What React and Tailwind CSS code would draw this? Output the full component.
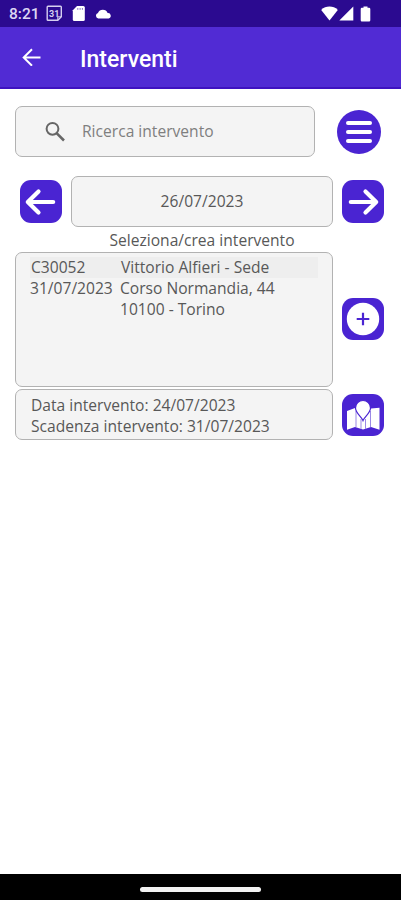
const intervento = {
    codice: "C30052",
    scadenza: "31/07/2023",
    cliente: "Vittorio Alfieri - Sede",
    indirizzo: "Corso Normandia, 44",
    citta: "10100 - Torino",
}

const box = "border border-b-[1.5px] border-[#b2b2b2] bg-[#f4f4f4] rounded-[7px]"
const squareButton = "w-[42px] shrink-0 rounded-[11px] bg-[#4a24d2] cursor-pointer"


function StatusBar(){
    return(
        <div className="h-[27px] bg-[#2b0a90] flex items-center justify-between pl-[9px] pr-[30px] text-white">
            <div className="flex items-center h-full">
                <span className="w-[37px] pt-[2px] text-[15.5px] leading-none text-[#dcd6f3] font-['Roboto',sans-serif] font-medium">8:21</span>
                <svg width="17" height="17" viewBox="0 0 17 17" fill="none" stroke="#d6cff0" strokeWidth="1.4">
                    <path d="M2 1.2h12.5q.8 0 .8.8v9.8l-3.5 3.5H2q-.8 0-.8-.8V2q0-.8.8-.8Z" />
                    <path d="M15.3 11.8h-3.5v3.5" strokeWidth="1" />
                    <text x="8.2" y="11.6" textAnchor="middle" fontSize="9" fontWeight="700" fontFamily="Roboto, sans-serif" fill="#d6cff0" stroke="none">31</text>
                </svg>
                <svg className="ml-[9px]" width="14" height="17" viewBox="0 0 14 17">
                    <path d="M5 1h6.3q1.5 0 1.5 1.5v12q0 1.5-1.5 1.5H2.3Q.8 16 .8 14.500V5.200Z" fill="#fff" />
                    <path d="M5.800 3.200v1.500M8.100 3.200v1.500M10.400 3.200v1.500" stroke="#6d58b8" strokeWidth="1" />
                </svg>
                <svg className="ml-[9px]" width="17" height="10" viewBox="0 0 17 10">
                    <path d="M3.200 9.500a2.900 2.900 0 0 1-.2-5.600A5.200 5.200 0 0 1 12.600 4a2.800 2.800 0 0 1 1 5.500Z" fill="#fff" />
                </svg>
            </div>
            <div className="flex items-center">
                <svg width="17" height="15" viewBox="0 0 17 15">
                    <path d="M8.500 14.500.2 3.900Q3.800.6 8.500.6t8.300 3.300Z" fill="#fff" />
                </svg>
                <svg className="ml-[1px]" width="15" height="15" viewBox="0 0 15 15">
                    <path d="M14.300.5v14H.300Z" fill="#fff" />
                </svg>
                <svg className="ml-[6px]" width="11" height="16" viewBox="0 0 11 16">
                    <path d="M3.500.5h4v1.300h1.600q1.200 0 1.200 1.200v11.300q0 1.200-1.200 1.200H1.900Q.7 15.500.7 14.300V3q0-1.200 1.200-1.200h1.600Z" fill="#fff" />
                </svg>
            </div>
        </div>
    )
}


function Header(){
    return(
        <header className="h-[62px] bg-[#512bd4] border-b-2 border-[#3f12c0] flex items-center pl-[22px]">
            <svg width="19" height="18" viewBox="0 0 19 18" fill="none" stroke="#fff" strokeWidth="2">
                <path d="M18.500 9.500H1.800M10 1.300 1.700 9.500l8.300 8.200" />
            </svg>
            <h1 className="ml-[39px] pt-[5px] text-[23px] leading-none font-medium text-white font-['Roboto',sans-serif]">Interventi</h1>
        </header>
    )
}


function ArrowButton({flip}){
    return(
        <button className={`${squareButton} h-[43px]`}>
            <svg className={flip ? "-scale-x-100" : ""} width="42" height="43" viewBox="0 0 42 43" fill="none" stroke="#fff" strokeWidth="4.2" strokeLinecap="round" strokeLinejoin="round">
                <path d="M33.200 22H9M18.500 11.500 7.800 22l10.700 10.500" />
            </svg>
        </button>
    )
}


export default function App(){

    return(
        <div className="h-[900px] w-[401px] flex flex-col overflow-hidden bg-white text-[#585858] font-['Open_Sans',sans-serif] text-[15.600px] leading-[21px]">

            <StatusBar />
            <Header />

            <main className="flex-1 flex flex-col pl-[15px] pt-[17px]">

                <div className="flex items-center">
                    <div className={`${box} w-[300px] h-[51px] flex items-center pl-[28px]`}>
                        <svg width="22" height="22" viewBox="0 0 22 22" fill="none" stroke="#666" strokeWidth="2">
                            <circle cx="8.500" cy="7.800" r="5.900" />
                            <path d="m12.800 12.300 7.200 7.200" strokeWidth="2.600" />
                        </svg>
                        <span className="ml-[16px] text-[#7f7f7f]">Ricerca intervento</span>
                    </div>
                    <button className="ml-[22px] size-[44px] rounded-full bg-[#4a24d2] flex flex-col items-center justify-center gap-[5px] cursor-pointer">
                        <span className="w-[26px] h-[4px] rounded-full bg-white" />
                        <span className="w-[26px] h-[4px] rounded-full bg-white" />
                        <span className="w-[26px] h-[4px] rounded-full bg-white" />
                    </button>
                </div>

                <div className="mt-[19px] pl-[5px] flex items-center">
                    <ArrowButton />
                    <div className={`${box} ml-[9px] mr-[9px] w-[262px] h-[51px] flex items-center justify-center`}>26/07/2023</div>
                    <ArrowButton flip />
                </div>

                <p className="mt-[3px] w-[374px] text-center">Seleziona/crea intervento</p>

                <div className="mt-[1px] flex items-center">
                    <div className={`${box} w-[318px] h-[135px] pl-[14px] pt-[4px]`}>
                        <div className="flex w-[288px] pl-[1px] bg-[#eeeeee]">
                            <span className="w-[90px]">{intervento.codice}</span>
                            <span>{intervento.cliente}</span>
                        </div>
                        <div className="flex">
                            <span className="w-[90px]">{intervento.scadenza}</span>
                            <span>{intervento.indirizzo}</span>
                        </div>
                        <div className="pl-[90px]">{intervento.citta}</div>
                    </div>
                    <button className={`${squareButton} ml-[9px] mb-[2px] h-[42px] flex items-center justify-center`}>
                        <svg width="34" height="34" viewBox="0 0 34 34">
                            <circle cx="17" cy="17" r="16.200" fill="#fff" />
                            <path d="M17 10.700v12.600M10.700 17h12.600" stroke="#4a24d2" strokeWidth="2.200" />
                        </svg>
                    </button>
                </div>

                <div className="mt-[2px] flex items-center">
                    <div className={`${box} w-[318px] h-[51px] pl-[15px] pt-[5px]`}>
                        <p>Data intervento: 24/07/2023</p>
                        <p>Scadenza intervento: {intervento.scadenza}</p>
                    </div>
                    <button className={`${squareButton} ml-[9px] h-[42px]`}>
                        <svg width="42" height="42" viewBox="0 0 42 42">
                            <path d="M5 17 13 14l8 3 8-2.500 8.500-.7v22L29 33l-8 2.500L13 33l-8 2.800Z" fill="#fff" />
                            <path d="M14 17v16M19 25v10M23.500 25v10M28.500 17v16" stroke="#9b89e6" strokeWidth="1" />
                            <path d="M21 26.500c-1.500-4-7.500-7.500-7.500-12.500a7.500 7.500 0 0 1 15 0c0 5-6 8.500-7.500 12.500Z" fill="#fff" stroke="#4a24d2" strokeWidth="1.200" />
                        </svg>
                    </button>
                </div>

            </main>

            <footer className="h-[26px] bg-black flex justify-center items-start pt-[13px]">
                <span className="w-[121px] h-[5px] rounded-full bg-[#f2f2f2]" />
            </footer>
        </div>
    )
}
